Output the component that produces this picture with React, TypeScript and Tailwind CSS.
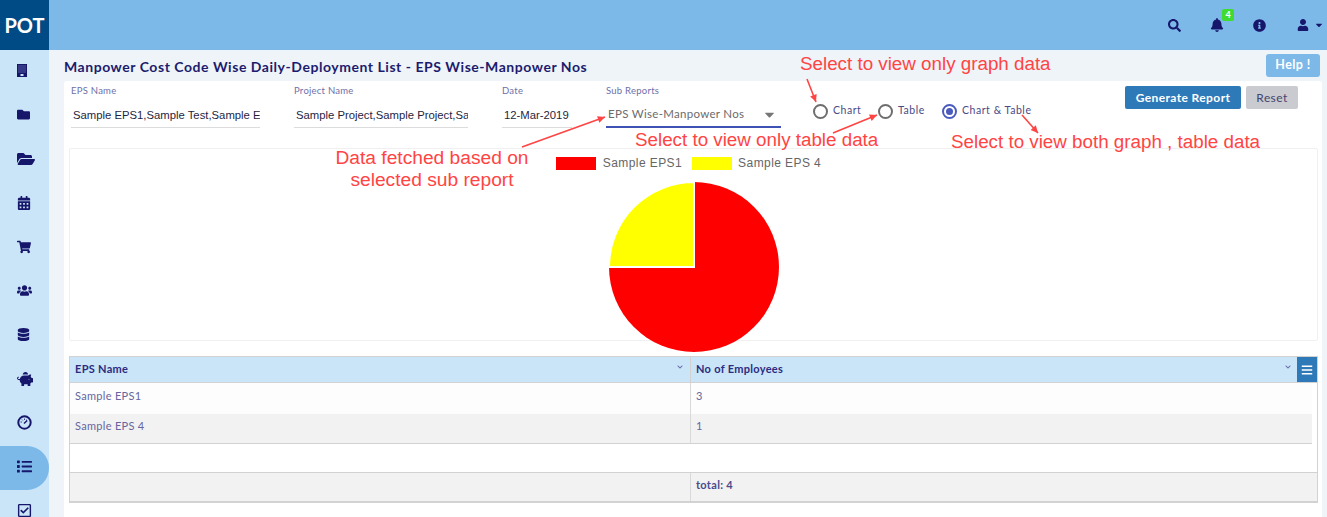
import {
  FaFolder,
  FaFolderOpen,
  FaCalendarAlt,
  FaShoppingCart,
  FaUsers,
  FaDatabase,
  FaPiggyBank,
  FaList,
  FaRegCheckSquare,
  FaSearch,
  FaBell,
  FaInfoCircle,
  FaUser,
  FaCaretDown,
  FaBars,
  FaChevronDown,
} from 'react-icons/fa';

const lato = 'font-["Lato",sans-serif]';
const arial = 'font-["Liberation_Sans",Arial,sans-serif]';

function BuildingIcon({ size, className }: { size: number; className?: string }) {
  return (
    <svg width={(size * 10) / 13} height={size} viewBox="0 0 10 13" className={className}>
      <rect width="10" height="13" fill="currentColor" />
      {[1.5, 3.5, 5.5, 7.5].map((x) =>
        [1.5, 3.5, 5.5, 7.5].map((y) => (
          <rect key={`${x}-${y}`} x={x} y={y} width="1" height="1" fill="#8f9fd8" />
        )),
      )}
      <rect x="3.5" y="10" width="3" height="2" fill="#cae4f8" />
    </svg>
  );
}

function GaugeIcon({ size, className }: { size: number; className?: string }) {
  return (
    <svg width={size} height={size} viewBox="0 0 15 15" className={className}>
      <circle cx="7.5" cy="7.5" r="6.2" fill="none" stroke="currentColor" strokeWidth="2" />
      <path d="M3.6 7h1.2M5 4.6l.8.8M7.5 3.6v1.2M10 4.6l-.8.8" stroke="currentColor" strokeWidth="1" fill="none" />
      <path d="M7 8.5 L10.2 5.4" stroke="currentColor" strokeWidth="1.4" fill="none" />
    </svg>
  );
}

const sideIcons = [
  { icon: BuildingIcon, size: 13 },
  { icon: FaFolder, size: 13 },
  { icon: FaFolderOpen, size: 18 },
  { icon: FaCalendarAlt, size: 14 },
  { icon: FaShoppingCart, size: 14 },
  { icon: FaUsers, size: 15 },
  { icon: FaDatabase, size: 13 },
  { icon: FaPiggyBank, size: 16 },
  { icon: GaugeIcon, size: 15 },
  { icon: FaList, size: 15, active: true },
  { icon: FaRegCheckSquare, size: 15 },
];

function Field({ label, value, width, gap }: { label: string; value: string; width: string; gap: string }) {
  return (
    <div className={`${width} ${gap} shrink-0`}>
      <div className="h-[13px] text-[9.5px] leading-[13px] tracking-[0.25px] text-[#6f6fa8]">{label}</div>
      <div className={`mt-[7px] h-[24px] overflow-hidden whitespace-nowrap border-b border-[#dcdcdc] pl-[2px] text-[11.3px] leading-[22px] text-[#1f1f3f] ${arial}`}>
        {value}
      </div>
    </div>
  );
}

function Radio({ label, checked, width }: { label: string; checked?: boolean; width: string }) {
  return (
    <div className={`flex items-center gap-[5px] ${width}`}>
      <span
        className={`flex h-[15px] w-[15px] items-center justify-center rounded-full border-2 ${checked ? 'border-[#4a5bbd]' : 'border-[#6e6e6e]'}`}
      >
        {checked && <span className="h-[7px] w-[7px] rounded-full bg-[#4a5bbd]" />}
      </span>
      <span className="-mt-[2px] text-[10.5px] tracking-[0.55px] text-[#4a4a85]">{label}</span>
    </div>
  );
}

function Arrow({ x1, y1, x2, y2 }: { x1: number; y1: number; x2: number; y2: number }) {
  const a = Math.atan2(y2 - y1, x2 - x1);
  const l = 8;
  const p1 = `${x2 - l * Math.cos(a - 0.45)},${y2 - l * Math.sin(a - 0.45)}`;
  const p2 = `${x2 - l * Math.cos(a + 0.45)},${y2 - l * Math.sin(a + 0.45)}`;
  return (
    <>
      <line x1={x1} y1={y1} x2={x2} y2={y2} stroke="#ff4444" strokeWidth="1.6" />
      <polygon points={`${x2},${y2} ${p1} ${p2}`} fill="#ff4444" />
    </>
  );
}

function Note({ className, children }: { className: string; children: React.ReactNode }) {
  return <div className={`absolute leading-[22px] text-[#ff4444] ${arial} ${className}`}>{children}</div>;
}

export default function App() {
  return (
    <div className={`relative flex h-[517px] w-[1327px] flex-col overflow-hidden bg-[#eff4f8] ${lato}`}>
      <header className="flex h-[50px] shrink-0 items-center bg-[#7cb8e8]">
        <div className="flex h-full w-[49px] items-center justify-center bg-[#004a85] text-[20px] font-bold text-white">POT</div>
        <div className="ml-auto flex items-center text-[#16166b]">
          <FaSearch size={13} className="mr-[29px]" />
          <div className="relative mr-[29px]">
            <FaBell size={14} />
            <span className="absolute -right-[10px] -top-[9px] flex h-[12px] w-[12px] items-center justify-center rounded-[2px] bg-[#3fdc2f] text-[9px] font-bold text-white">
              4
            </span>
          </div>
          <FaInfoCircle size={13} className="mr-[31px]" />
          <FaUser size={12} />
          <FaCaretDown size={10} className="ml-[5px] mr-[3px]" />
        </div>
      </header>

      <div className="flex min-h-0 flex-1">
        <aside className="flex w-[49px] shrink-0 flex-col bg-[#cae4f8] text-[#16166b]">
          {sideIcons.map(({ icon: Icon, size, active }, i) => (
            <div
              key={i}
              className={`flex h-[44px] shrink-0 items-center pb-[3px] pl-[17px] ${active ? 'rounded-r-[22px] bg-[#7cb8e8]' : ''}`}
            >
              <Icon size={size} className="shrink-0" />
            </div>
          ))}
        </aside>

        <main className="flex min-w-0 flex-1 flex-col pl-[15px] pr-[5px]">
          <div className="flex h-[31px] shrink-0 items-center justify-between">
            <h1 className="mt-[1px] text-[14px] font-bold tracking-[0.54px] text-[#1c1c6e]">
              Manpower Cost Code Wise Daily-Deployment List - EPS Wise-Manpower Nos
            </h1>
            <button className="mr-[2px] h-[23px] w-[54px] rounded-[3px] bg-[#7cb8e8] text-[12.5px] font-bold tracking-[0.4px] text-white">
              Help !
            </button>
          </div>

          <section className="min-h-0 flex-1 rounded-t-[3px] bg-white pl-[5px] pr-[4px]">
            <div className="flex h-[67px] items-start pl-[2px] pt-[3px]">
              <Field label="EPS Name" value="Sample EPS1,Sample Test,Sample EPS 4" width="w-[189px]" gap="mr-[34px]" />
              <Field label="Project Name" value="Sample Project,Sample Project,Sample" width="w-[174px]" gap="mr-[34px]" />
              <Field label="Date" value="12-Mar-2019" width="w-[70px]" gap="mr-[34px]" />
              <div className="mr-[32px] w-[175px] shrink-0">
                <div className="h-[13px] text-[9.5px] leading-[13px] tracking-[0.25px] text-[#6f6fa8]">Sub Reports</div>
                <div className="mt-[7px] flex h-[24px] items-center justify-between border-b-2 border-[#3f51b5] pb-[2px] pl-[2px] pr-[4px] text-[11.5px] tracking-[0.3px] text-[#6b6b6b]">
                  <span>EPS Wise-Manpower Nos</span>
                  <FaCaretDown size={15} className="text-[#777777]" />
                </div>
              </div>
              <div className="mt-[20px] flex items-center">
                <Radio label="Chart" width="w-[65px]" />
                <Radio label="Table" width="w-[64px]" />
                <Radio label="Chart & Table" checked width="w-[183px]" />
              </div>
              <button className="mt-[2px] h-[23px] w-[116px] shrink-0 rounded-[2px] bg-[#2e7ab8] text-[12px] font-bold tracking-[0.4px] text-white">
                Generate Report
              </button>
              <button className="ml-[5px] mt-[2px] h-[23px] w-[52px] shrink-0 rounded-[2px] bg-[#c9cbd0] text-[12px] tracking-[0.4px] text-[#45456f]">
                Reset
              </button>
            </div>

            <div className="h-[193px] rounded-[2px] border border-[#f0f0f0] pt-[7px]">
              <div className={`flex h-[14px] items-center justify-center pr-[10px] text-[12px] tracking-[0.42px] text-[#666666] ${arial}`}>
                <span className="mr-[7px] h-[13px] w-[40px] bg-[#ff0000]" />
                <span className="mr-[10px]">Sample EPS1</span>
                <span className="mr-[6px] h-[13px] w-[40px] bg-[#ffff00]" />
                <span>Sample EPS 4</span>
              </div>
              <svg width="170" height="170" viewBox="0 0 170 170" className="relative mx-auto mt-[12px]">
                <circle cx="85" cy="85" r="85" fill="#ff0000" />
                <path d="M85 85 L0 85 A85 85 0 0 1 85 0 Z" fill="#ffff00" stroke="#ffffff" strokeWidth="2" />
              </svg>
            </div>

            <div className="mt-[15px] border border-b-2 border-[#d2d2d2] text-[11px] tracking-[0.3px]">
              <div className="flex h-[25px] bg-[#cae4f8] font-bold text-[#2c2c80]">
                <div className="flex w-[621px] items-center justify-between border-r border-[#d2d2d2] pl-[5px] pr-[7px]">
                  <span>EPS Name</span>
                  <FaChevronDown size={6} className="-mt-[6px] text-[#6b6bb0]" />
                </div>
                <div className="flex flex-1 items-center justify-between pl-[5px] pr-[6px]">
                  <span>No of Employees</span>
                  <FaChevronDown size={6} className="-mt-[6px] text-[#6b6bb0]" />
                </div>
                <div className="flex w-[20px] items-center justify-center bg-[#2e7ab8] text-white">
                  <FaBars size={12} />
                </div>
              </div>
              <div className="border-t border-[#d2d2d2] pr-[5px] text-[#65659f]">
                <div className="flex h-[31px] bg-[#fdfdfd]">
                  <div className="w-[621px] border-r border-[#d9d9d9] pl-[5px] pt-[5px]">Sample EPS1</div>
                  <div className="pl-[5px] pt-[5px]">3</div>
                </div>
                <div className="flex h-[30px] border-b border-[#d2d2d2] bg-[#f2f2f2]">
                  <div className="w-[621px] border-r border-[#d9d9d9] pl-[5px] pt-[4px]">Sample EPS 4</div>
                  <div className="pl-[5px] pt-[4px]">1</div>
                </div>
              </div>
              <div className="h-[28px] bg-white" />
              <div className="flex h-[29px] border-t border-[#d2d2d2] bg-[#f2f2f2] font-bold text-[#4a4a8c]">
                <div className="w-[621px] border-r border-[#d9d9d9]" />
                <div className="pl-[5px] pt-[4px]">total: 4</div>
              </div>
            </div>
          </section>
        </main>
      </div>

      {/* annotations drawn on top of the screenshot */}
      <svg width="1327" height="517" className="pointer-events-none absolute left-0 top-0">
        <Arrow x1={522} y1={147} x2={605} y2={117} />
        <Arrow x1={807} y1={79} x2={816} y2={102} />
        <Arrow x1={833} y1={133} x2={877} y2={115} />
        <Arrow x1={1022} y1={115} x2={1038} y2={133} />
      </svg>
      <Note className="left-[800px] top-[53px] text-[18.8px]">Select to view only graph data</Note>
      <Note className="left-[635px] top-[129px] text-[18.8px]">Select to view only table data</Note>
      <Note className="left-[951px] top-[131px] text-[18.8px]">Select to view both graph , table data</Note>
      <Note className="left-[332px] top-[147px] w-[200px] text-center text-[19.2px]">Data fetched based on selected sub report</Note>
    </div>
  );
}
